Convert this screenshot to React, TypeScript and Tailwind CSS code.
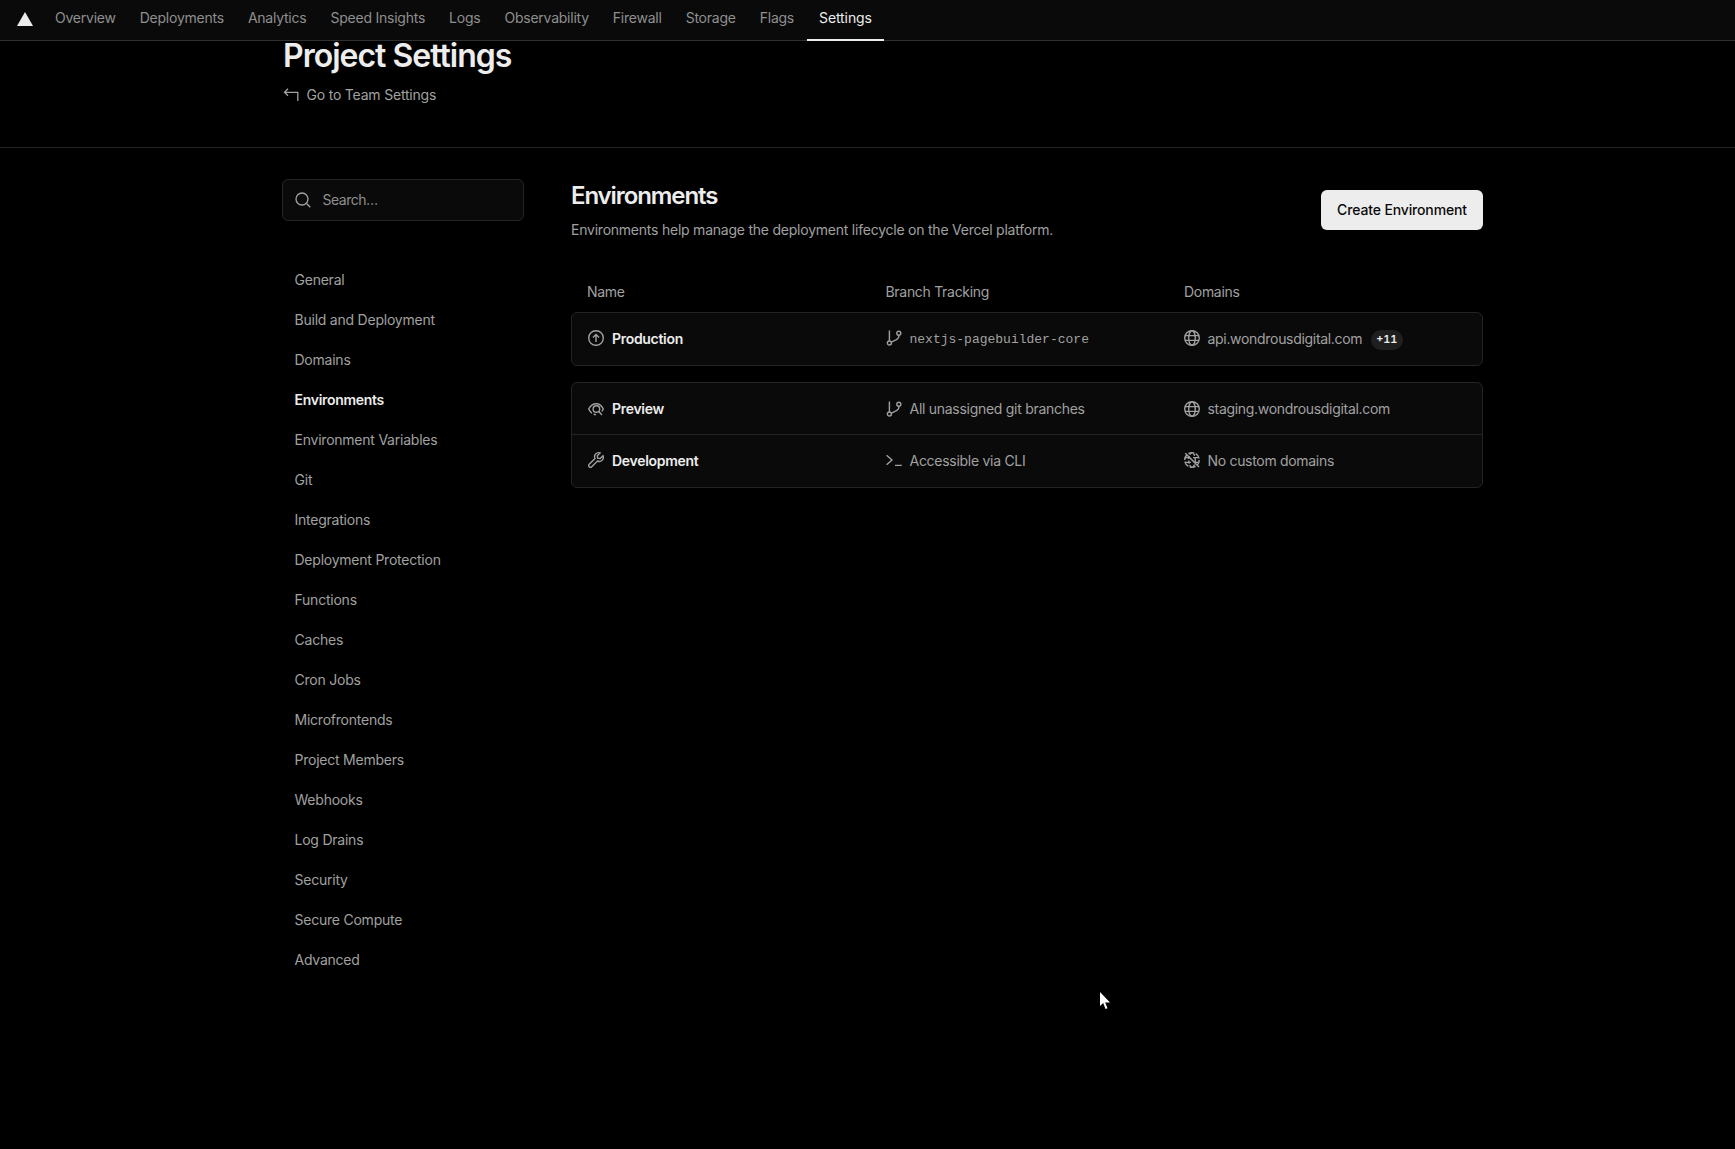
import React from "react";

const font = "font-['Inter',sans-serif]";

const I = ({ children, size = 16, className = "" }: { children: React.ReactNode; size?: number; className?: string }) => (
  <svg width={size} height={size} viewBox="0 0 16 16" fill="none" stroke="currentColor" strokeWidth="1.4" className={`shrink-0 ${className}`}>
    {children}
  </svg>
);

const Branch = () => (
  <I className="text-[#a1a1a1]">
    <circle cx="3.4" cy="13" r="2" />
    <circle cx="12.8" cy="3.2" r="2" />
    <path d="M3.4 .6v10.400M12.800 5.200v1.300c0 2.500-2.600 3.400-4.800 4.300-1.200.5-2.200 1-3 1.800" />
  </I>
);
const Globe = () => (
  <I className="text-[#a1a1a1]">
    <circle cx="8" cy="8" r="7.300" />
    <ellipse cx="8" cy="8" rx="3.300" ry="7.300" />
    <path d="M1 5.600h14M1 10.400h14" />
  </I>
);
const NoGlobe = () => (
  <I className="text-[#a1a1a1]">
    <circle cx="8" cy="8" r="7.300" strokeDasharray="6 1.600" />
    <ellipse cx="8" cy="8" rx="3.300" ry="7.300" strokeDasharray="3 1.500" />
    <path d="M1 5.600h5M9 5.600h6M1 10.400h6M10 10.400h5" />
    <path d="M1.300 1.300l13.700 13.700" strokeWidth="1.500" />
  </I>
);
const Up = () => (
  <I className="text-[#a1a1a1]">
    <circle cx="8" cy="8" r="7.300" />
    <path d="M8 12V4.600M4.900 7.600 8 4.500l3.100 3.100" />
  </I>
);
const Eye = () => (
  <I className="text-[#a1a1a1]">
    <path d="M4 12.200C2.700 11.200 1.600 9.800.7 8 2.400 4.600 5 2.700 8.200 2.700c3 0 5.500 1.800 7.100 5.300-.4.900-.9 1.700-1.400 2.400" />
    <circle cx="8.400" cy="8" r="3.300" />
    <path d="M10.800 10.500l3.200 3.500M5.600 13.300c.8.200 1.600.3 2.500.3" />
  </I>
);
const Wrench = () => (
  <I className="text-[#a1a1a1]">
    <path d="M15 3.700 12.200 6.500 9.600 6.100 9.300 3.700 12.100.9C9.900.300 7.500 1.300 6.800 3.300c-.4 1.100-.3 2.300.2 3.300L1.200 12.300c-.7.700-.7 1.800 0 2.500s1.800.7 2.500 0l5.800-5.800c1 .5 2.200.6 3.300.2 2-.7 3.200-3.300 2.200-5.500Z" />
  </I>
);
const Terminal = () => (
  <I className="text-[#a1a1a1]">
    <path d="M.6 3.300 6 8 .6 12.700M9 13.400h6.800" />
  </I>
);

const sections = [
  "General",
  "Build and Deployment",
  "Domains",
  "Environments",
  "Environment Variables",
  "Git",
  "Integrations",
  "Deployment Protection",
  "Functions",
  "Caches",
  "Cron Jobs",
  "Microfrontends",
  "Project Members",
  "Webhooks",
  "Log Drains",
  "Security",
  "Secure Compute",
  "Advanced",
];

const tabs = ["Overview", "Deployments", "Analytics", "Speed Insights", "Logs", "Observability", "Firewall", "Storage", "Flags", "Settings"];

function Row({
  icon,
  name,
  bIcon,
  branch,
  mono,
  dIcon,
  domain,
  badge,
  h,
}: {
  icon: React.ReactNode;
  name: string;
  bIcon: React.ReactNode;
  branch: string;
  mono?: boolean;
  dIcon: React.ReactNode;
  domain: string;
  badge?: string;
  h: string;
}) {
  return (
    <div className={`grid grid-cols-[298px_298px_1fr] items-center pl-[16px] ${h}`}>
      <div className="flex items-center gap-[8px]">
        {icon}
        <span className="text-[14px] font-semibold text-[#ededed] tracking-[-0.3px]">{name}</span>
      </div>
      <div className="flex items-center gap-[7.5px]">
        {bIcon}
        <span
          className={
            mono
              ? "font-['Liberation_Mono',monospace] pt-[3px] text-[13px] text-[#a1a1a1]"
              : "text-[14px] text-[#a1a1a1] tracking-[-0.28px]"
          }
        >
          {branch}
        </span>
      </div>
      <div className="flex items-center gap-[7.5px]">
        {dIcon}
        <span className="text-[14px] text-[#a1a1a1] tracking-[-0.31px]">{domain}</span>
        {badge && (
          <span className="ml-[1px] mt-[3px] flex h-[20px] w-[32px] items-center justify-center rounded-full bg-[#1f1f1f] text-[11px] font-semibold tabular-nums text-[#ededed]">
            {badge}
          </span>
        )}
      </div>
    </div>
  );
}

export default function App() {
  return (
    <div className={`relative h-screen overflow-hidden bg-black ${font} text-[#a1a1a1]`}>
      <nav className="flex h-[41px] items-stretch border-b border-[#2e2e2e] bg-[#0a0a0a] pl-[17px]">
        <svg width="16" height="14" viewBox="0 0 16 14" fill="#ededed" className="mt-[12px] shrink-0">
          <path d="M8 0l8 14H0z" />
        </svg>
        <div className="ml-[10px] flex">
          {tabs.map((t) => (
            <div
              key={t}
              className={`flex items-center px-[12px] text-[14px] ${
                t === "Settings"
                  ? "ml-[1px] h-[41px] mb-[-1px] border-b-2 border-[#ededed] pb-[4px] tracking-[-0.1px] text-[#ededed]"
                  : "h-[40px] pb-[5px] tracking-[-0.235px] text-[#8f8f8f]"
              }`}
            >
              {t}
            </div>
          ))}
        </div>
      </nav>

      <header className="h-[107px] border-b border-[#242424]">
        <div className="pl-[283px]">
          <h1 className="text-[32px] leading-[30px] font-semibold tracking-[-1px] text-[#ededed]">Project Settings</h1>
          <div className="mt-[13px] flex items-center gap-[7.5px] text-[14px] tracking-[-0.2px] text-[#a1a1a1]">
            <svg width="16" height="16" viewBox="0 0 16 16" fill="none" stroke="currentColor" strokeWidth="1.3">
              <path d="M5 1.800 1.500 5.300 5 8.800M1.500 5.300H14.800V14" />
            </svg>
            <span>Go to Team Settings</span>
          </div>
        </div>
      </header>

      <div className="flex pl-[282px] pt-[31px]">
        <aside className="w-[242px] shrink-0">
          <div className="flex h-[42px] items-center gap-[11.5px] rounded-[6px] border border-[#242424] bg-[#0a0a0a] pl-[12px]">
            <svg width="16" height="16" viewBox="0 0 16 16" fill="none" stroke="#a1a1a1" strokeWidth="1.3">
              <circle cx="7" cy="7" r="6" />
              <path d="M11.500 11.500l3.800 3.800" />
            </svg>
            <span className="pb-[1px] text-[14px] tracking-[-0.5px] text-[#8f8f8f]">Search…</span>
          </div>
          <ul className="mt-[38px]">
            {sections.map((s) => (
              <li
                key={s}
                className={`flex h-[40px] items-center pl-[12.5px] text-[14px] ${
                  s === "Environments" ? "font-semibold text-[#ededed] tracking-[-0.3px]" : "text-[#a1a1a1] tracking-[-0.23px]"
                }`}
              >
                {s}
              </li>
            ))}
          </ul>
        </aside>

        <main className="ml-[47px] w-[912px] shrink-0">
          <div className="flex items-start justify-between">
            <div>
              <h2 className="pt-[1px] text-[24px] leading-[32px] font-semibold tracking-[-1.1px] text-[#ededed]">Environments</h2>
              <p className="mt-[8px] text-[14px] leading-[20px] tracking-[-0.23px] text-[#a1a1a1]">
                Environments help manage the deployment lifecycle on the Vercel platform.
              </p>
            </div>
            <button className="mt-[11px] h-[40px] w-[162px] rounded-[6px] bg-[#ededed] pb-[2px] text-[14px] font-medium tracking-[-0.14px] text-[#0a0a0a]">
              Create Environment
            </button>
          </div>

          <div className="mt-[31px] grid h-[41px] grid-cols-[298.5px_298.5px_1fr] items-center pl-[16px] text-[14px] tracking-[-0.3px] text-[#a1a1a1]">
            <span>Name</span>
            <span>Branch Tracking</span>
            <span>Domains</span>
          </div>

          <div className="rounded-[6px] border border-[#242424] bg-[#0a0a0a]">
            <Row
              h="h-[52px] pb-[2px]"
              icon={<Up />}
              name="Production"
              bIcon={<Branch />}
              branch="nextjs-pagebuilder-core"
              mono
              dIcon={<Globe />}
              domain="api.wondrousdigital.com"
              badge="+11"
            />
          </div>

          <div className="mt-[16px] rounded-[6px] border border-[#242424] bg-[#0a0a0a]">
            <Row
              h="h-[52px] border-b border-[#242424]"
              icon={<Eye />}
              name="Preview"
              bIcon={<Branch />}
              branch="All unassigned git branches"
              dIcon={<Globe />}
              domain="staging.wondrousdigital.com"
            />
            <Row
              h="h-[52px] pb-[2px]"
              icon={<Wrench />}
              name="Development"
              bIcon={<Terminal />}
              branch="Accessible via CLI"
              dIcon={<NoGlobe />}
              domain="No custom domains"
            />
          </div>
        </main>
      </div>

      <svg width="12" height="20" viewBox="0 0 12 20" className="absolute left-[1099px] top-[991px]">
        <path d="M1 1v14l3.200-3 2.300 6 2-.8-2.300-5.700H11z" fill="#fff" />
      </svg>
    </div>
  );
}
